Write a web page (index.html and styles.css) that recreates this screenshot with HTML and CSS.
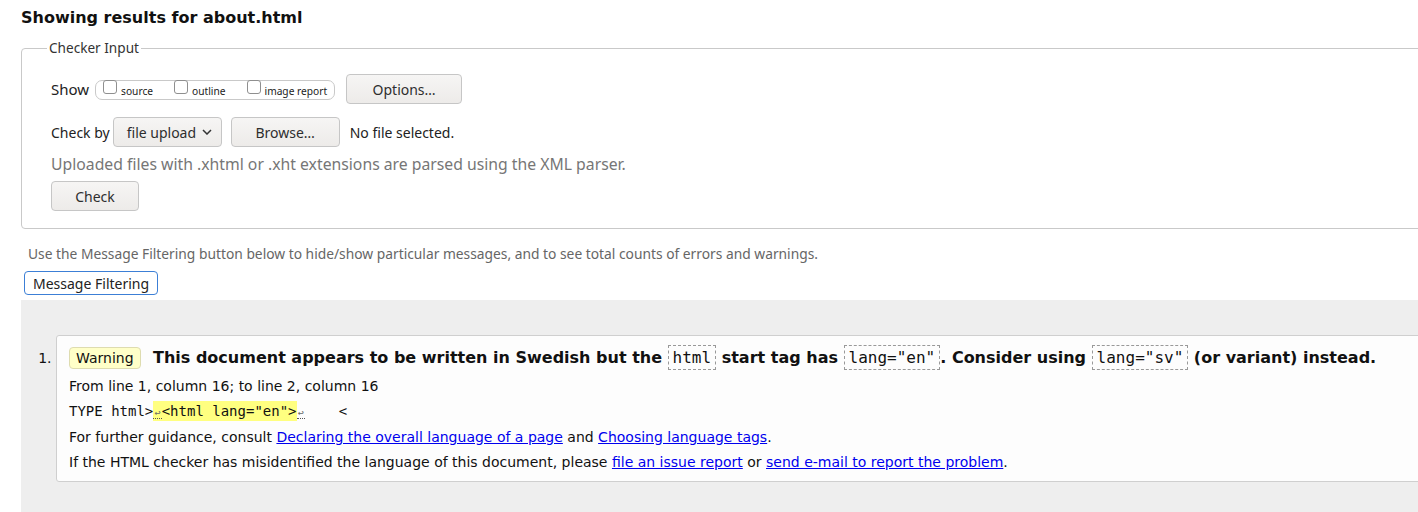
FILE: index.html
```html
<!DOCTYPE html>
<html lang="en">
<head>
<meta charset="utf-8">
<title>Showing results for about.html</title>
<link rel="stylesheet" href="styles.css">
</head>
<body>
<div class="page">
  <h2 class="title">Showing results for about.html</h2>
  <fieldset class="checker">
    <legend>Checker Input</legend>
    <div class="row">
      <span class="lbl-show">Show</span>
      <span class="group">
        <label class="opt"><span class="cb"></span>source</label>
        <label class="opt"><span class="cb"></span>outline</label>
        <label class="opt"><span class="cb"></span>image report</label>
      </span>
      <button class="btn btn-options">Options…</button>
    </div>
    <div class="row row-check">
      <span class="lbl">Check by</span>
      <span class="select">file upload<svg class="chev" width="10" height="6" viewBox="0 0 10 6"><path d="M1 1l4 4 4-4" fill="none" stroke="#333" stroke-width="1.5"/></svg></span>
      <button class="btn btn-browse">Browse…</button>
      <span class="nofile">No file selected.</span>
    </div>
    <p class="hint">Uploaded files with .xhtml or .xht extensions are parsed using the XML parser.</p>
    <button class="btn btn-check">Check</button>
  </fieldset>
  <p class="filter-note">Use the Message Filtering button below to hide/show particular messages, and to see total counts of errors and warnings.</p>
  <button class="filter-btn">Message Filtering</button>
  <div class="results">
    <ol class="messages">
      <li class="msg">
        <p class="msg-head"><span class="badge">Warning</span> <span class="msg-text">This document appears to be written in Swedish but the <code>html</code> start tag has <code>lang="en"</code>. Consider using <code>lang="sv"</code> (or variant) instead.</span></p>
        <p class="msg-line">From line 1, column 16; to line 2, column 16</p>
        <p class="msg-line extract"><code>TYPE html&gt;<mark class="hl"><span class="lf">↩</span>&lt;html lang="en"&gt;</mark><span class="lf">↩</span>    &lt;</code></p>
        <p class="msg-line">For further guidance, consult <a href="#">Declaring the overall language of a page</a> and <a href="#">Choosing language tags</a>.</p>
        <p class="msg-line">If the HTML checker has misidentified the language of this document, please <a href="#">file an issue report</a> or <a href="#">send e-mail to report the problem</a>.</p>
      </li>
    </ol>
  </div>
</div>
</body>
</html>
```
FILE: styles.css
```css
html, body {
  margin: 0;
  padding: 0;
  overflow: hidden;
  background: #fff;
}
body {
  font-family: "Noto Sans", sans-serif;
  font-size: 14px;
  color: #222;
}
.page {
  width: 1480px;
  padding-left: 21px;
}
.title {
  margin: 0;
  padding-top: 8px;
  font-family: "DejaVu Sans", sans-serif;
  font-weight: bold;
  font-size: 16px;
  line-height: 20px;
  color: #111;
}
.checker {
  margin: 10px 0 0 0;
  padding: 16px 29px 17px 29px;
  border: 1px solid #c9c9c9;
  border-radius: 4px;
  min-inline-size: 0;
}
.checker legend {
  margin-left: -4px;
  padding: 0 2px;
  font-size: 13.6px;
  line-height: 20px;
  color: #333;
}
.row {
  display: flex;
  align-items: center;
  height: 30px;
}
.row-check {
  margin-top: 13px;
}
.lbl-show {
  font-size: 15px;
  color: #222;
  margin-right: 6px;
}
.group {
  display: flex;
  align-items: flex-start;
  height: 20px;
  box-sizing: border-box;
  border: 1px solid #c9c9c9;
  border-radius: 7px;
  padding: 0 7px 0 7px;
  margin-right: 11px;
  margin-top: 1px;
}
.opt {
  display: flex;
  align-items: flex-start;
  font-size: 10.2px;
  line-height: 14px;
  color: #222;
  margin-right: 21px;
  padding-top: 3px;
}
.opt:last-child {
  margin-right: 0;
}
.opt .cb {
  display: block;
  width: 14px;
  height: 14px;
  box-sizing: border-box;
  border: 1px solid #8f8f8f;
  border-radius: 3px;
  background: #fff;
  margin-top: -4px;
  margin-right: 4px;
}
.btn, .select {
  font-family: "Noto Sans", sans-serif;
  font-size: 14px;
  color: #2e2e2e;
  height: 30px;
  box-sizing: border-box;
  border: 1px solid #c6c6c6;
  border-radius: 4px;
  background: linear-gradient(#f6f5f4, #edebe9);
  padding: 0;
  display: inline-flex;
  align-items: center;
  justify-content: center;
}
.btn-options {
  width: 116px;
}
.lbl {
  margin-right: 3px;
}
.select {
  width: 109px;
  justify-content: flex-start;
  padding-left: 13px;
  margin-right: 9px;
}
.chev {
  margin-left: 6px;
}
.btn-browse {
  width: 109px;
  margin-right: 10px;
}
.nofile {
  color: #222;
}
.hint {
  margin: 7px 0 0 0;
  font-size: 15.75px;
  line-height: 20px;
  color: #767676;
}
.btn-check {
  margin-top: 7px;
  width: 88px;
}
.filter-note {
  margin: 15px 0 0 7px;
  font-size: 13.8px;
  line-height: 20px;
  color: #666;
}
.filter-btn {
  display: block;
  margin: 7px 0 0 3px;
  height: 24px;
  padding: 0 8px;
  font-family: "Noto Sans", sans-serif;
  font-size: 14px;
  color: #222;
  background: #fff;
  border: 1px solid #3c7fd6;
  border-radius: 4px;
}
.results {
  margin-top: 5px;
  background: #eeeeee;
  padding-top: 35px;
  min-height: 400px;
}
.messages {
  margin: 0;
  padding-left: 35px;
  font-family: "DejaVu Sans", sans-serif;
  font-size: 14px;
  color: #111;
}
.msg {
  background: #fdfdfd;
  border: 1px solid #cfcfcf;
  border-radius: 3px;
  padding: 10px 12px 6px 12px;
}
.msg p {
  margin: 0;
}
.msg-head {
  line-height: 24px;
  margin-bottom: 4px !important;
}
.badge {
  display: inline-block;
  background: #ffffc8;
  border: 1px solid #dedcb0;
  border-radius: 4px;
  padding: 0 6px;
  line-height: 20px;
  color: #111;
  margin-right: 8px;
}
.msg-text {
  font-weight: bold;
  font-size: 16px;
}
.msg-text code {
  font-family: "DejaVu Sans Mono", monospace;
  font-weight: normal;
  font-size: 16px;
  border: 1px dashed #999;
  padding: 2px 4px;
}
.msg-line {
  line-height: 25.33px;
}
.extract code {
  font-family: "DejaVu Sans Mono", monospace;
  font-size: 14px;
  white-space: pre;
}
.hl {
  background: #ffff80;
  color: #111;
  padding: 2px 0;
}
.lf {
  display: inline-block;
  width: 8.4px;
  font-size: 10px;
  color: #666;
  text-align: center;
  border-bottom: 1px dotted #555;
  line-height: 11px;
}
.msg a {
  color: #0000ee;
}
```
